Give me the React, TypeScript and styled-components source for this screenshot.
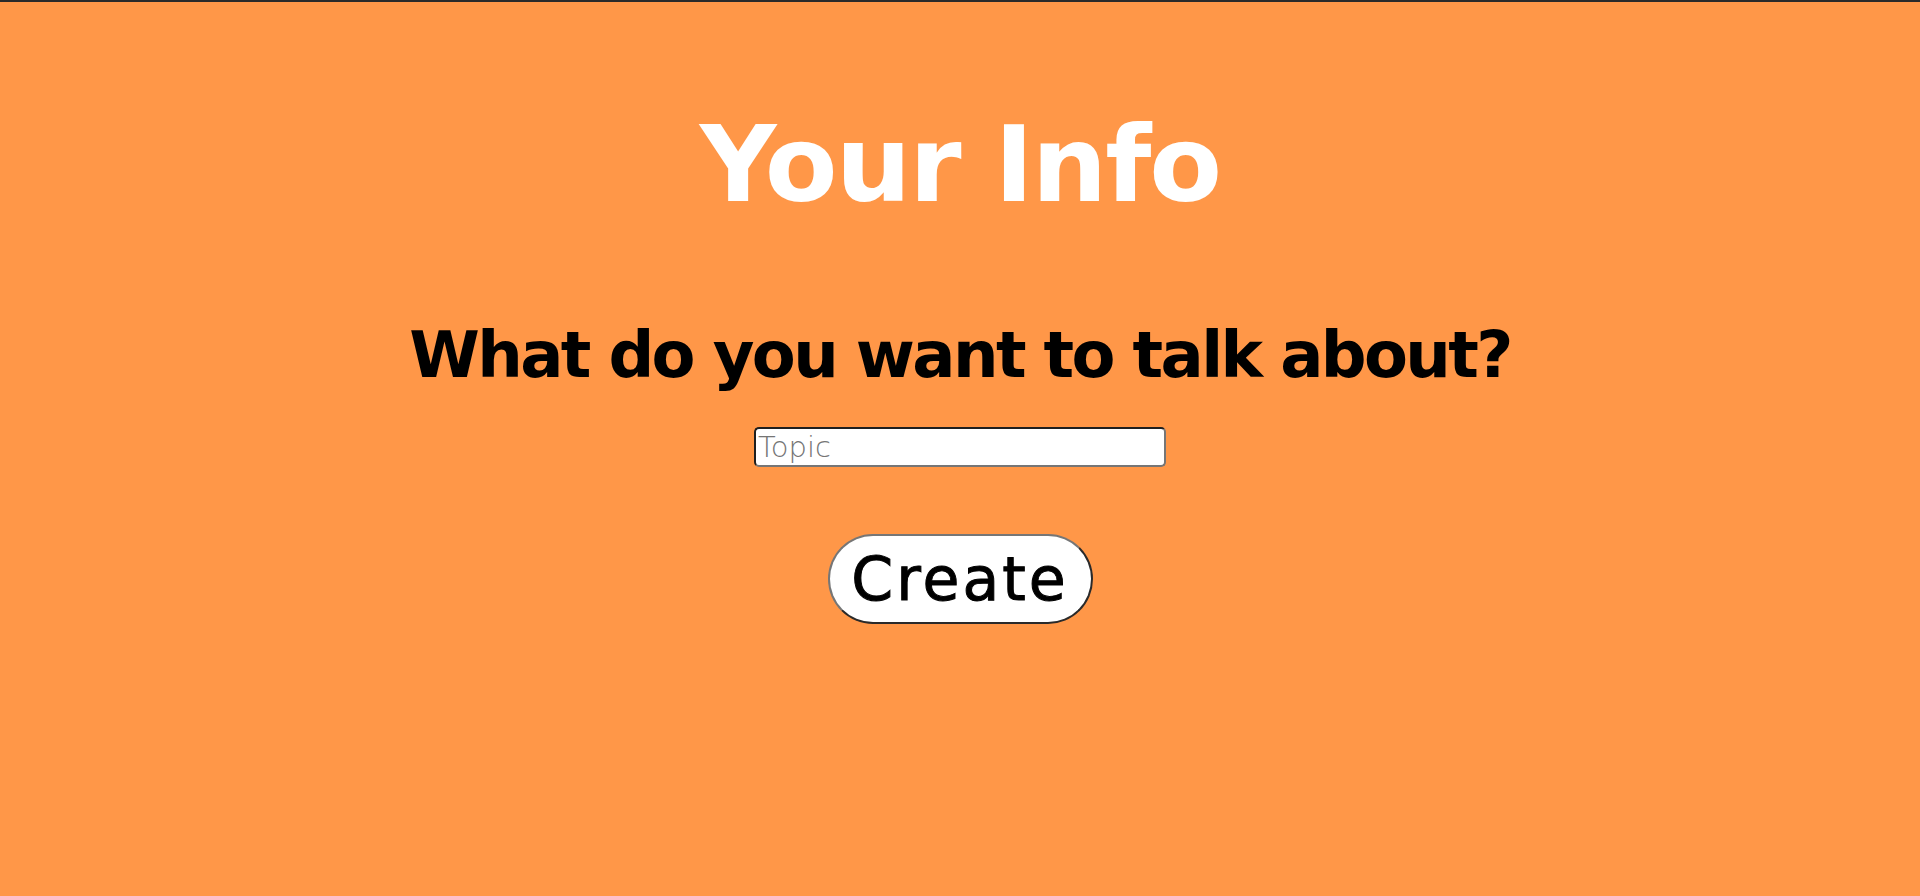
import React from "react";
import styled, { createGlobalStyle } from "styled-components";

const GlobalStyle = createGlobalStyle`
  html, body {
    margin: 0;
    padding: 0;
    background: #ff9748;
  }
  * { box-sizing: border-box; }
`;

const Page = styled.main`
  min-height: 100vh;
  background: #ff9748;
  border-top: 2px solid #2a2a2a;
  display: flex;
  flex-direction: column;
  align-items: center;
  padding-top: 110px;
  font-family: "DejaVu Sans", "Liberation Sans", sans-serif;
`;

const Title = styled.h1`
  margin: 0;
  font-size: 106px;
  line-height: 1;
  font-weight: 700;
  color: #ffffff;
  letter-spacing: -2px;
`;

const Question = styled.h2`
  margin: 105px 0 0;
  font-size: 64px;
  line-height: 1;
  font-weight: 700;
  color: #000000;
  letter-spacing: -2.6px;
`;

const TopicInput = styled.input`
  margin-top: 40px;
  width: 412px;
  height: 40px;
  padding: 0 2px;
  border-style: solid;
  border-width: 2px;
  border-color: #1f1f1f #767676 #767676 #1f1f1f;
  border-radius: 5px;
  background: #ffffff;
  font-family: "DejaVu Sans", "Liberation Sans", sans-serif;
  font-weight: 300;
  font-size: 29px;
  line-height: 1;
  color: #000;
  outline: none;

  &::placeholder {
    color: #757575;
  }
`;

const CreateButton = styled.button`
  margin-top: 67px;
  width: 265px;
  height: 90px;
  border-radius: 45px;
  border-style: solid;
  border-width: 2px;
  border-color: #767676 #2a2a2a #2a2a2a #767676;
  background: #ffffff;
  color: #000000;
  font-family: "DejaVu Sans", "Liberation Sans", sans-serif;
  font-size: 60px;
  font-weight: 500;
  letter-spacing: 3px;
  -webkit-text-stroke: 1px #000;
  line-height: 1;
  padding: 0;
  cursor: pointer;
`;

export default function App() {
  return (
    <>
      <GlobalStyle />
      <Page>
        <Title>Your Info</Title>
        <Question>What do you want to talk about?</Question>
        <TopicInput type="text" placeholder="Topic" />
        <CreateButton type="button">Create</CreateButton>
      </Page>
    </>
  );
}
